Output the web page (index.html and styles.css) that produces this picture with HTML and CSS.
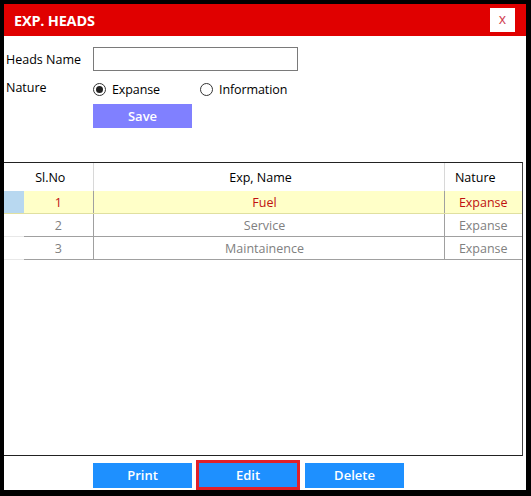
FILE: index.html
```html
<!DOCTYPE html>
<html lang="en">
<head>
  <meta charset="UTF-8" />
  <title>Exp. Heads</title>
  <link rel="stylesheet" href="styles.css">
</head>
<body>
  <div class="window">
    <div class="title-bar">
      <span class="title">EXP. HEADS</span>
      <button class="close-btn">x</button>
    </div>

    <div class="form">
      <div class="form-row">
        <label class="form-label" for="headsName">Heads Name</label>
        <input type="text" id="headsName" class="text-input" />
      </div>
      <div class="form-row nature-row">
        <span class="form-label">Nature</span>
        <label class="radio"><span class="radio-dot checked"></span>Expanse</label>
        <label class="radio"><span class="radio-dot"></span>Information</label>
      </div>
      <div class="form-row">
        <span class="form-label"></span>
        <button class="btn save-btn">Save</button>
      </div>
    </div>

    <div class="grid-box">
      <table class="grid">
        <colgroup>
          <col style="width:20px">
          <col style="width:69px">
          <col>
          <col style="width:78px">
        </colgroup>
        <thead>
          <tr>
            <th></th>
            <th>Sl.No</th>
            <th>Exp, Name</th>
            <th>Nature</th>
          </tr>
        </thead>
        <tbody>
          <tr class="selected">
            <td class="row-head"></td>
            <td class="sl">1</td>
            <td class="name">Fuel</td>
            <td>Expanse</td>
          </tr>
          <tr>
            <td class="row-head"></td>
            <td class="sl">2</td>
            <td class="name">Service</td>
            <td>Expanse</td>
          </tr>
          <tr>
            <td class="row-head"></td>
            <td class="sl">3</td>
            <td class="name">Maintainence</td>
            <td>Expanse</td>
          </tr>
        </tbody>
      </table>
    </div>

    <div class="actions">
      <button class="btn action-btn">Print</button>
      <button class="btn action-btn focused">Edit</button>
      <button class="btn action-btn">Delete</button>
    </div>
  </div>
</body>
</html>
```

FILE: styles.css
```css
html, body {
  margin: 0;
  padding: 0;
  background: #000;
}

body {
  padding: 4px 5px 6px 4px;
  font-family: 'Open Sans', 'Noto Sans', sans-serif;
  font-size: 12.5px;
  color: #000;
}

.window {
  width: 522px;
  height: 486px;
  background: #fff;
  display: flex;
  flex-direction: column;
}

.title-bar {
  height: 32px;
  background: #e00000;
  display: flex;
  align-items: center;
  justify-content: space-between;
  padding: 0 11px 0 10px;
}

.title {
  color: #fff;
  font-weight: bold;
  font-size: 14.5px;
  letter-spacing: -0.2px;
}

.close-btn {
  width: 25px;
  height: 24px;
  background: #fff;
  border: none;
  color: #d04050;
  font-family: 'Open Sans', sans-serif;
  font-size: 14px;
  padding: 0 0 3px;
  line-height: 1;
}

.form {
  padding: 11px 0 0 2px;
}

.form-row {
  display: flex;
  align-items: center;
}

.form-label {
  width: 87px;
  flex-shrink: 0;
}

.text-input {
  width: 205px;
  height: 24px;
  box-sizing: border-box;
  border: 1px solid #7a7a7a;
  margin: 0;
}

.nature-row {
  margin-top: 6px;
  height: 24px;
}

.nature-row .form-label {
  position: relative;
  top: -2px;
}

.radio {
  display: flex;
  align-items: center;
  gap: 6px;
  width: 107px;
  font-size: 12.5px;
  letter-spacing: -0.1px;
}

.radio-dot {
  width: 11px;
  height: 11px;
  border: 1px solid #333;
  border-radius: 50%;
  position: relative;
}

.radio-dot.checked::after {
  content: '';
  position: absolute;
  left: 2px;
  top: 2px;
  width: 7px;
  height: 7px;
  border-radius: 50%;
  background: #222;
}

.btn {
  border: none;
  color: #fff;
  font-family: 'Open Sans', 'Noto Sans', sans-serif;
  font-weight: 600;
  font-size: 13px;
  cursor: pointer;
  padding: 0;
}

.save-btn {
  width: 99px;
  height: 24px;
  background: #8080ff;
  margin-top: 3px;
}

.grid-box {
  margin: 34px 3px 0 0;
  height: 294px;
  border-top: 1px solid #222;
  border-right: 1px solid #444;
  border-bottom: 1px solid #222;
  box-sizing: border-box;
}

.grid {
  width: 100%;
  border-collapse: collapse;
  table-layout: fixed;
  font-size: 12.5px;
}

.grid th {
  height: 28px;
  font-weight: normal;
  text-align: center;
  border-left: 1px solid #d8d8d8;
  padding: 0 16px 0 0;
}

.grid th:first-child,
.grid th:nth-child(2) {
  border-left: none;
}

.grid td {
  height: 22px;
  padding: 0;
  text-align: center;
  color: #808080;
  border-left: 1px solid #a0a0a0;
  border-bottom: 1px solid #a0a0a0;
}

.grid td.name {
  padding-right: 8px;
}

.grid td.row-head {
  border-left: none;
  border-bottom: 1px solid #e8e8e8;
}

.grid td.sl {
  border-left: none;
}

.grid tr.selected td {
  background: #ffffc8;
  color: #c01010;
  border-bottom-color: #e0e0a0;
}

.grid tr.selected td.row-head {
  background: #b8d8f0;
}

.actions {
  display: flex;
  align-items: center;
  gap: 4px;
  padding: 4px 0 0 89px;
}

.action-btn {
  width: 99px;
  height: 25px;
  background: #1e90ff;
}

.action-btn.focused {
  box-sizing: content-box;
  width: 98px;
  height: 24px;
  border: 3px solid #e0202a;
  margin-right: 1px;
}
```
